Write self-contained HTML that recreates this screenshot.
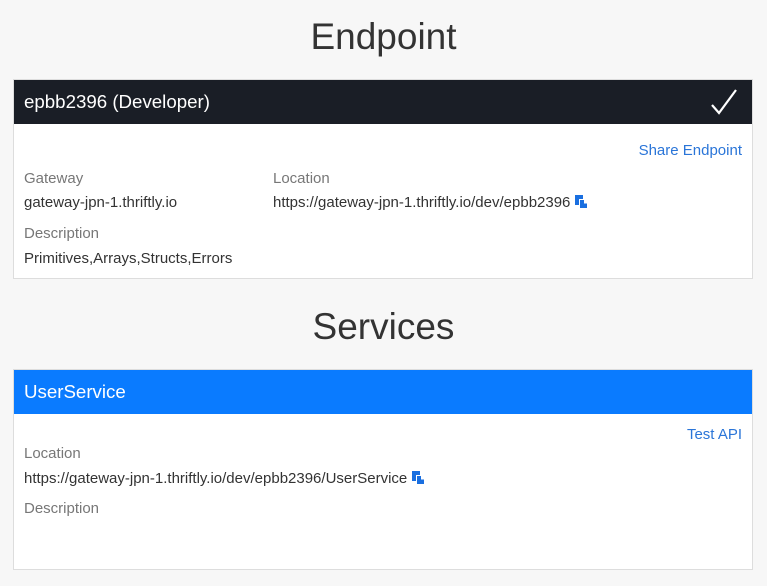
<!DOCTYPE html>
<html><head><style>
body{margin:0;background:#f7f7f7;font-family:"Liberation Sans",sans-serif;width:767px;height:586px;overflow:hidden;position:relative;color:#333}
.t{position:absolute;left:0;width:767px;text-align:center;font-size:37px;color:#333;font-weight:normal}
.card{position:absolute;left:13px;width:738px;background:#fff;border:1px solid #ddd}
.hd{height:44px;line-height:44px;color:#fff;font-size:18.7px;padding-left:10px}
.a{position:absolute;font-size:15px;white-space:nowrap}
.lbl{color:#777}
.lnk{color:#2a75d8}
.cp{display:inline-block;vertical-align:-2px;margin-left:5px}
</style></head><body>
<div class="t" style="top:16px">Endpoint</div>
<div class="card" style="top:79px;height:198px">
<div class="hd" style="background:#1a1e26">epbb2396 (Developer)</div>
<svg style="position:absolute;right:14px;top:8px" width="28" height="28" viewBox="0 0 28 28"><path d="M2 17 L9 25 L26 2" fill="none" stroke="#fff" stroke-width="2.2"/></svg>
<div class="a lnk" style="right:10px;top:62px">Share Endpoint</div>
<div class="a lbl" style="left:10px;top:90px">Gateway</div>
<div class="a" style="left:10px;top:114px">gateway-jpn-1.thriftly.io</div>
<div class="a lbl" style="left:10px;top:145px">Description</div>
<div class="a" style="left:10px;top:170px">Primitives,Arrays,Structs,Errors</div>
<div class="a lbl" style="left:259px;top:90px">Location</div>
<div class="a" style="left:259px;top:114px">https://gateway-jpn-1.thriftly.io/dev/epbb2396<svg class="cp" width="14" height="14" viewBox="0 0 14 14"><rect x="0" y="0" width="8" height="10" fill="#1a6fe0"/><rect x="4" y="4" width="9" height="10" fill="#fff"/><path d="M5 5H9V8.5H12V13H5Z" fill="#1a6fe0"/></svg></div>
</div>
<div class="t" style="top:306px">Services</div>
<div class="card" style="top:369px;height:199px">
<div class="hd" style="background:#0a7bff">UserService</div>
<div class="a lnk" style="right:10px;top:56px">Test API</div>
<div class="a lbl" style="left:10px;top:75px">Location</div>
<div class="a" style="left:10px;top:100px">https://gateway-jpn-1.thriftly.io/dev/epbb2396/UserService<svg class="cp" width="14" height="14" viewBox="0 0 14 14"><rect x="0" y="0" width="8" height="10" fill="#1a6fe0"/><rect x="4" y="4" width="9" height="10" fill="#fff"/><path d="M5 5H9V8.5H12V13H5Z" fill="#1a6fe0"/></svg></div>
<div class="a lbl" style="left:10px;top:130px">Description</div>
</div>
</body></html>
